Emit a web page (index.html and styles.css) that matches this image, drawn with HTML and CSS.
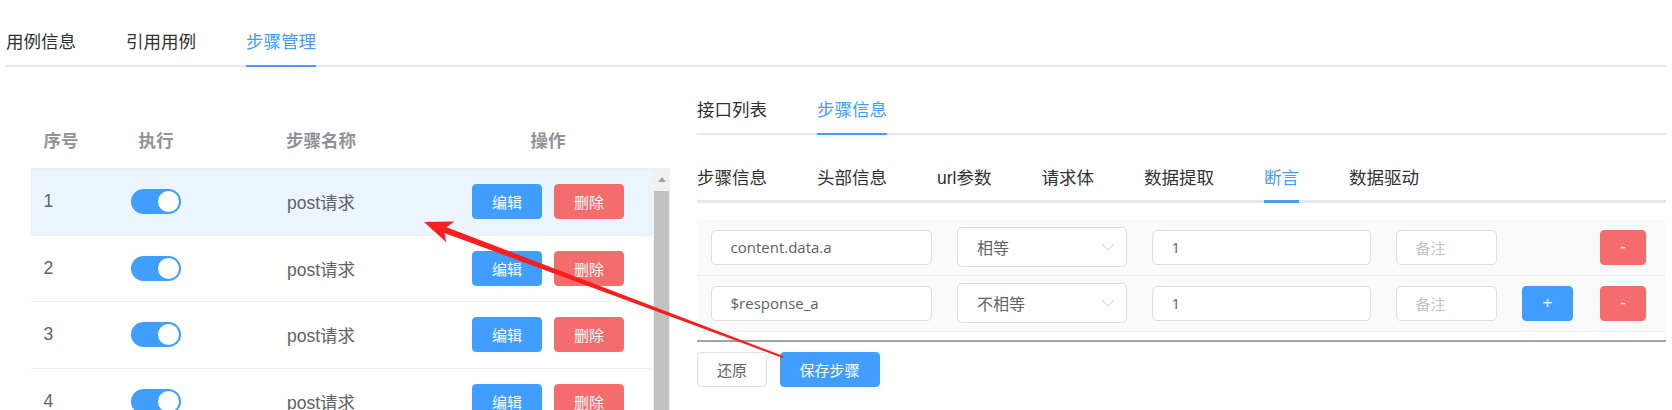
FILE: index.html
```html
<!DOCTYPE html>
<html lang="zh-CN">
<head>
<meta charset="utf-8">
<title>步骤管理</title>
<link rel="stylesheet" href="styles.css">
</head>
<body>
<div class="page">
  <div class="tabs">
    <div class="tab"><span>用例信息</span></div>
    <div class="tab"><span>引用用例</span></div>
    <div class="tab active"><span>步骤管理</span></div>
  </div>

  <div class="main">
    <section class="left">
      <div class="thead">
        <div class="cell c-left">序号</div>
        <div class="cell">执行</div>
        <div class="cell">步骤名称</div>
        <div class="cell">操作</div>
      </div>
      <div class="tbody-wrap">
        <div class="tbody">
          <div class="tr current">
            <div class="cell c-left">1</div>
            <div class="cell"><span class="switch"></span></div>
            <div class="cell">post请求</div>
            <div class="cell ops"><button class="btn btn-primary">编辑</button><button class="btn btn-danger">删除</button></div>
          </div>
          <div class="tr">
            <div class="cell c-left">2</div>
            <div class="cell"><span class="switch"></span></div>
            <div class="cell">post请求</div>
            <div class="cell ops"><button class="btn btn-primary">编辑</button><button class="btn btn-danger">删除</button></div>
          </div>
          <div class="tr">
            <div class="cell c-left">3</div>
            <div class="cell"><span class="switch"></span></div>
            <div class="cell">post请求</div>
            <div class="cell ops"><button class="btn btn-primary">编辑</button><button class="btn btn-danger">删除</button></div>
          </div>
          <div class="tr">
            <div class="cell c-left">4</div>
            <div class="cell"><span class="switch"></span></div>
            <div class="cell">post请求</div>
            <div class="cell ops"><button class="btn btn-primary">编辑</button><button class="btn btn-danger">删除</button></div>
          </div>
        </div>
        <div class="scrollbar">
          <div class="sb-arrow"><span class="sb-tri"></span></div>
          <div class="sb-thumb"></div>
        </div>
      </div>
    </section>

    <section class="right">
      <div class="tabs tabs-gap">
        <div class="tab"><span>接口列表</span></div>
        <div class="tab active"><span>步骤信息</span></div>
      </div>
      <div class="tabs tabs-gap">
        <div class="tab"><span>步骤信息</span></div>
        <div class="tab"><span>头部信息</span></div>
        <div class="tab"><span>url参数</span></div>
        <div class="tab"><span>请求体</span></div>
        <div class="tab"><span>数据提取</span></div>
        <div class="tab active"><span>断言</span></div>
        <div class="tab"><span>数据驱动</span></div>
      </div>

      <div class="atable">
        <div class="arow">
          <div class="input">content.data.a</div>
          <div class="select"><span>相等</span><svg class="chev" width="12" height="7" viewBox="0 0 12 7"><polyline points="0.5,0.5 6,6 11.5,0.5" fill="none" stroke="#c0c4cc" stroke-width="1"/></svg></div>
          <div class="input">1</div>
          <div class="input placeholder">备注</div>
          <div></div>
          <button class="btn btn-danger sq-minus">-</button>
        </div>
        <div class="arow">
          <div class="input">$response_a</div>
          <div class="select"><span>不相等</span><svg class="chev" width="12" height="7" viewBox="0 0 12 7"><polyline points="0.5,0.5 6,6 11.5,0.5" fill="none" stroke="#c0c4cc" stroke-width="1"/></svg></div>
          <div class="input">1</div>
          <div class="input placeholder">备注</div>
          <button class="btn btn-primary sq-plus">+</button>
          <button class="btn btn-danger sq-minus">-</button>
        </div>
      </div>
      <div class="adivider"></div>
      <div class="actions">
        <button class="btn btn-plain">还原</button>
        <button class="btn btn-primary btn-wide">保存步骤</button>
      </div>
    </section>
  </div>

  <svg class="annot" width="1672" height="410" viewBox="0 0 1672 410">
    <polygon fill="#fa1e1e" points="424,222 454.1,221.6 446.6,227.3 783.35,356.06 782.65,357.94 444.4,232.9 446.3,242.2"/>
  </svg>
</div>
</body>
</html>
```

FILE: styles.css
```css
html, body {
  margin: 0;
  padding: 0;
  background: #fff;
}

body {
  font-family: "Liberation Sans", "Noto Sans CJK SC", sans-serif;
  color: #303133;
}

.page {
  position: relative;
  padding: 17px 6px 0;
}

/* ---------- tabs ---------- */
.tabs {
  display: flex;
  height: 50px;
  position: relative;
}

.tabs::after {
  content: "";
  position: absolute;
  left: 0;
  right: 0;
  bottom: 0;
  height: 2.5px;
  background: #e4e7ed;
}

.tabs-gap {
  margin-bottom: 17.5px;
}

.tab {
  display: flex;
  padding: 0 25px;
  font-size: 17.5px;
  color: #303133;
}

.tab:first-child {
  padding-left: 0;
}

.tab:last-child {
  padding-right: 0;
}

.tab span {
  position: relative;
  line-height: 50px;
  white-space: nowrap;
}

.tab.active {
  color: #409eff;
}

.tab.active span::after {
  content: "";
  position: absolute;
  left: 0;
  right: 0;
  bottom: 0;
  height: 2.5px;
  background: #409eff;
  z-index: 1;
}

/* ---------- layout ---------- */
.main {
  display: flex;
  gap: 27px;
  margin-top: 18px;
}

.left {
  width: 664px;
  flex: none;
  box-sizing: border-box;
  padding: 25px 0 0 25px;
}

.right {
  flex: 1;
  min-width: 0;
}

/* ---------- left table ---------- */
.thead,
.tr {
  display: grid;
  grid-template-columns: 82px 86px 244px 210px;
  align-items: center;
  box-sizing: border-box;
}

.thead {
  height: 59px;
  width: 639px;
  border-bottom: 1px solid #ebeef5;
  font-size: 17.5px;
  font-weight: bold;
  color: #909399;
}

.cell {
  text-align: center;
  display: flex;
  justify-content: center;
  align-items: center;
  white-space: nowrap;
}

.cell.c-left {
  justify-content: flex-start;
  padding-left: 12.5px;
}

.tbody-wrap {
  display: flex;
}

.tbody {
  width: 622px;
}

.tr {
  height: 66.5px;
  border-bottom: 1px solid #ebeef5;
  font-size: 17.5px;
  color: #606266;
}

.tr.current {
  background: #ecf5ff;
}

.ops {
  gap: 12px;
}

.switch {
  position: relative;
  display: block;
  width: 50px;
  height: 25px;
  border-radius: 12.5px;
  background: #409eff;
}

.switch::after {
  content: "";
  position: absolute;
  top: 2px;
  right: 2px;
  width: 21px;
  height: 21px;
  border-radius: 50%;
  background: #fff;
}

.scrollbar {
  width: 17px;
  background: #f1f1f1;
  display: flex;
  flex-direction: column;
}

.sb-arrow {
  height: 20px;
  display: flex;
  align-items: center;
  justify-content: center;
}

.sb-tri {
  width: 0;
  height: 0;
  border-left: 4.5px solid transparent;
  border-right: 4.5px solid transparent;
  border-bottom: 5px solid #a3a3a3;
}

.sb-thumb {
  flex: 1;
  margin: 2px 1px 0;
  background: #c1c1c1;
}

/* ---------- buttons ---------- */
.btn {
  box-sizing: border-box;
  height: 35px;
  width: 70px;
  border-radius: 4px;
  border: 1px solid transparent;
  font-family: "Liberation Sans", "Noto Sans CJK SC", sans-serif;
  font-size: 15px;
  color: #fff;
  padding: 0;
  cursor: pointer;
}

.btn-primary {
  background: #409eff;
  border-color: #409eff;
}

.btn-danger {
  background: #f56c6c;
  border-color: #f56c6c;
}

.btn-plain {
  background: #fff;
  border-color: #dcdfe6;
  color: #606266;
}

.btn-wide {
  width: 100px;
}

.sq-plus {
  width: 51px;
  font-size: 17px;
}

.sq-minus {
  width: 46px;
  font-size: 17px;
}

/* ---------- assertion table ---------- */
.atable {
  background: #fafafa;
  margin-right: 1px;
}

.arow {
  display: grid;
  grid-template-columns: 221px 170px 219px 101px 53px 46px;
  column-gap: 25px;
  align-items: center;
  box-sizing: border-box;
  height: 56px;
  padding-left: 14px;
  padding-bottom: 1px;
  border-bottom: 1px solid #ebeef5;
}

.input {
  box-sizing: border-box;
  height: 35px;
  display: flex;
  align-items: center;
  padding: 0 18.5px;
  background: #fff;
  border: 1px solid #dcdfe6;
  border-radius: 5px;
  font-family: "Open Sans", "Noto Sans CJK SC", sans-serif;
  font-size: 15px;
  color: #606266;
  white-space: nowrap;
}

.input.placeholder {
  color: #c0c4cc;
}

.select {
  box-sizing: border-box;
  height: 40px;
  display: flex;
  align-items: center;
  justify-content: space-between;
  padding: 0 12px 0 19px;
  background: #fff;
  border: 1px solid #dcdfe6;
  border-radius: 5px;
  font-family: "Liberation Sans", "Noto Sans CJK SC", sans-serif;
  font-size: 16px;
  color: #606266;
}

.chev {
  display: block;
}

.adivider {
  margin-top: 8px;
  height: 1.5px;
  background: #a3a3a3;
}

.actions {
  display: flex;
  gap: 12.5px;
  margin-top: 10.5px;
}

/* ---------- annotation overlay ---------- */
.annot {
  position: absolute;
  left: 0;
  top: 0;
  pointer-events: none;
}
```
